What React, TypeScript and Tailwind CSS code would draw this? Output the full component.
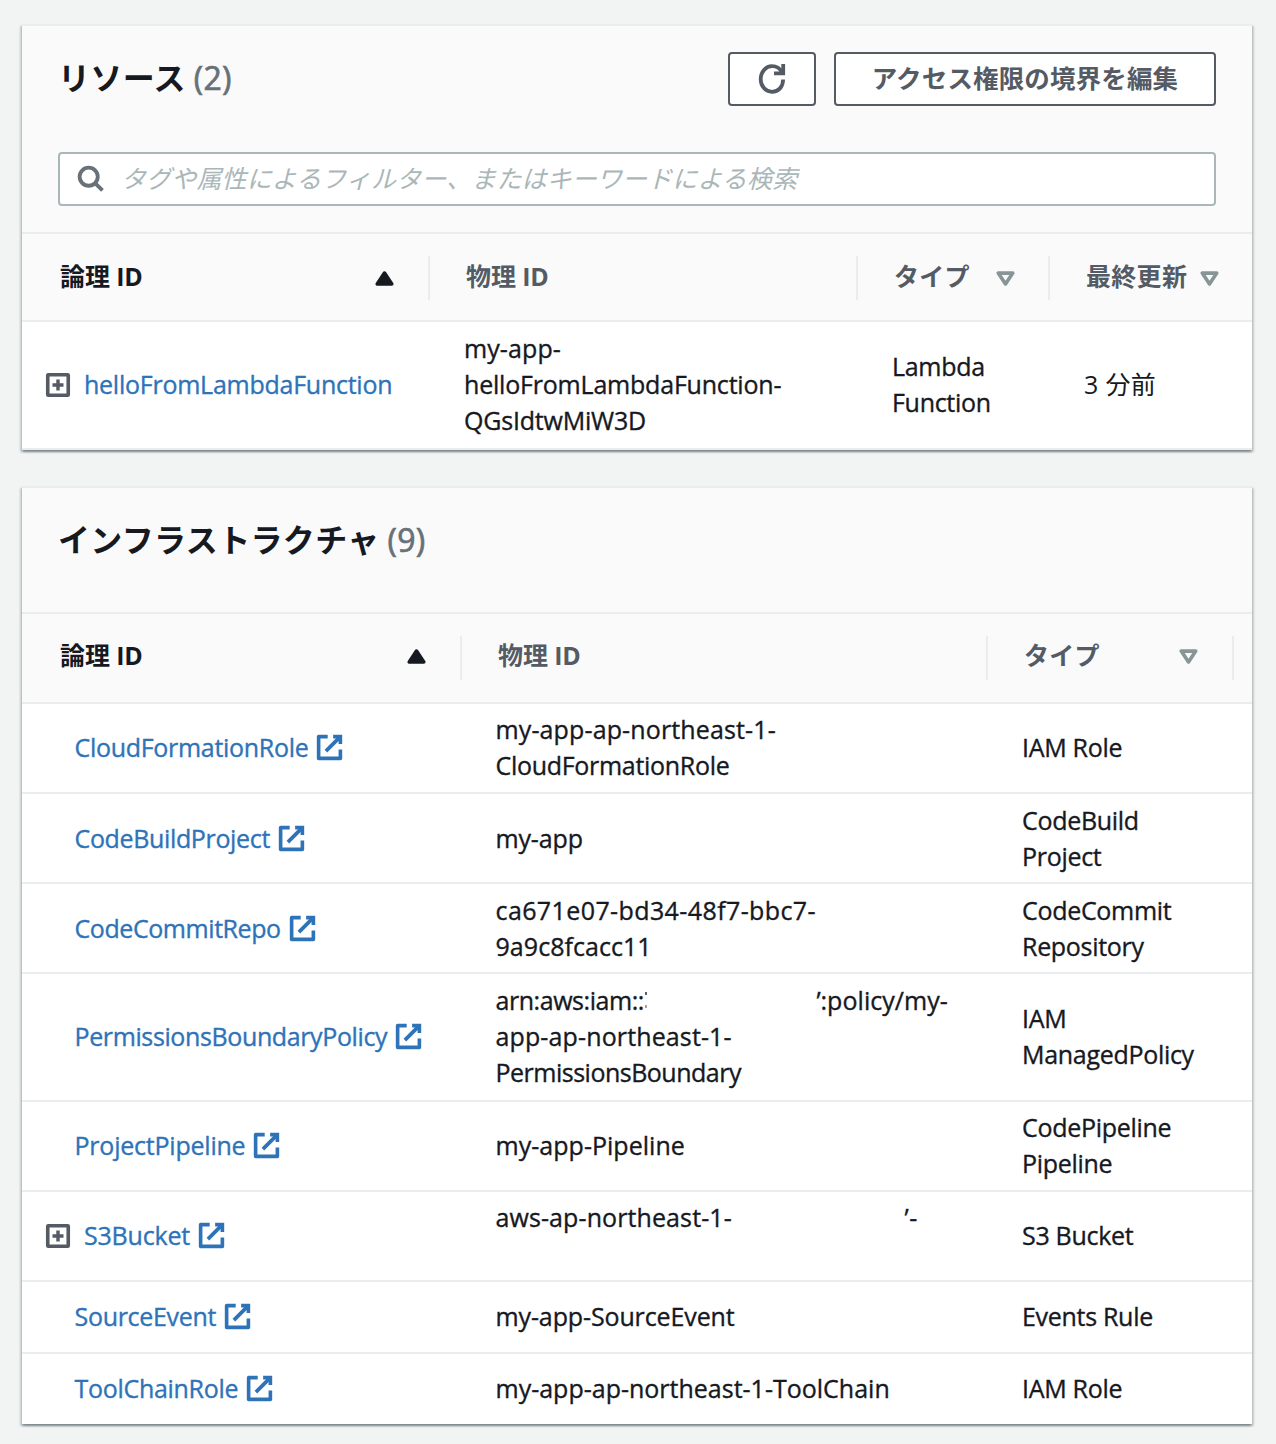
import React from "react";
import clsx from "clsx";

interface Column {
  label: string;
  sort?: "asc" | "none";
  className?: string;
}

interface Row {
  name: string;
  physical: React.ReactNode;
  type: React.ReactNode;
  updated?: string;
  expandable?: boolean;
  external?: boolean;
  height: string;
  // 文字幅の微調整
  tracking?: string;
}

const ExternalIcon = () => (
  <svg viewBox="0 0 16 16" className="mb-[2px] ml-[7px] size-[29px] shrink-0 fill-none stroke-current stroke-2">
    <path d="M10 2h4v4" />
    <path d="m6 10 8-8" />
    <path d="M14 9.05V14H2V2h5" strokeLinejoin="round" />
  </svg>
);

const SortIcon = ({ sort, className }: { sort: "asc" | "none"; className?: string }) => (
  <svg
    viewBox="0 0 16 16"
    strokeLinejoin="round"
    className={clsx(
      "size-[29px] shrink-0 stroke-2",
      sort === "asc" ? "fill-[#16191f] stroke-[#16191f]" : "fill-none stroke-[#879596]",
      className
    )}
  >
    {sort === "asc" ? <path d="M4 11h8L8 5z" /> : <path d="M4 5h8l-4 6z" />}
  </svg>
);

const ExpandIcon = () => (
  <svg viewBox="0 0 26 26" className="size-[26px] shrink-0 fill-none stroke-[#545b64]">
    <rect x="2.75" y="2.75" width="20.5" height="20.5" rx="0.5" strokeWidth="3.6" />
    <path d="M13 7.5v11M7.5 13h11" strokeWidth="3.4" />
  </svg>
);

// 伏せ字の手前に残る文字の断片
const MaskEdge = () => (
  <span className="flex w-[2px] flex-col gap-[10px] pt-[10px]">
    <span className="h-[3px] bg-[#16191f]/70" />
    <span className="h-[3px] bg-[#16191f]/40" />
  </span>
);

const resources: Row[] = [
  {
    name: "helloFromLambdaFunction",
    physical: (
      <>
        <span className="tracking-[0.1px]">my-app-</span><br />
        <span className="tracking-[-0.2px]">helloFromLambdaFunction-</span><br />
        <span className="tracking-[-0.2px]">QGsIdtwMiW3D</span>
      </>
    ),
    type: <>Lambda<br />Function</>,
    updated: "3 分前",
    expandable: true,
    height: "h-[128px]",
    tracking: "tracking-[-0.25px]",
  },
];

const infrastructure: Row[] = [
  {
    name: "CloudFormationRole",
    physical: <><span className="tracking-[0.13px]">my-app-ap-northeast-1-</span><br />CloudFormationRole</>,
    type: "IAM Role",
    external: true,
    height: "h-[90px]",
  },
  {
    name: "CodeBuildProject",
    physical: <span className="tracking-[-0.15px]">my-app</span>,
    type: <>CodeBuild<br />Project</>,
    external: true,
    height: "h-[90px] pt-[2px]",
    tracking: "tracking-[-0.35px]",
  },
  {
    name: "CodeCommitRepo",
    physical: <><span className="tracking-[0.4px]">ca671e07-bd34-48f7-bbc7-</span><br /><span className="tracking-[0.05px]">9a9c8fcacc11</span></>,
    type: <>CodeCommit<br />Repository</>,
    external: true,
    height: "h-[90px] pt-[2px]",
    tracking: "tracking-[-0.43px]",
  },
  {
    name: "PermissionsBoundaryPolicy",
    physical: (
      <>
        <span className="flex h-9">
          <span className="w-[149px] tracking-[-0.45px]">arn:aws:iam::</span>
          <MaskEdge />
          <span className="ml-[170px] w-[4px] tracking-[-0.3px]">’</span>
          <span className="tracking-[0.05px]">:policy/my-</span>
        </span>
        <span className="tracking-[0.13px]">app-ap-northeast-1-</span><br />
        <span className="tracking-[-0.5px]">PermissionsBoundary</span>
      </>
    ),
    type: <>IAM<br />ManagedPolicy</>,
    external: true,
    height: "h-[128px]",
    tracking: "tracking-[-0.38px]",
  },
  {
    name: "ProjectPipeline",
    physical: <span className="tracking-[0.03px]">my-app-Pipeline</span>,
    type: <>CodePipeline<br />Pipeline</>,
    external: true,
    height: "h-[90px]",
    tracking: "tracking-[-0.22px]",
  },
  {
    name: "S3Bucket",
    physical: (
      <span className="flex h-[72px]">
        <span className="w-[409px] tracking-[0.1px]">aws-ap-northeast-1-</span>
        <span className="tracking-[0.5px]">’-</span>
      </span>
    ),
    type: "S3 Bucket",
    expandable: true,
    external: true,
    height: "h-[90px]",
    tracking: "tracking-[-0.2px]",
  },
  {
    name: "SourceEvent",
    physical: <span className="tracking-[-0.12px]">my-app-SourceEvent</span>,
    type: "Events Rule",
    external: true,
    height: "h-[72px]",
  },
  {
    name: "ToolChainRole",
    physical: <span className="tracking-[0px]">my-app-ap-northeast-1-ToolChain</span>,
    type: "IAM Role",
    external: true,
    height: "h-[70px]",
  },
];

const Card = ({ children, className }: { children: React.ReactNode; className?: string }) => (
  <section
    className={clsx(
      "w-[1230px] border-t-2 border-[#eaeded] bg-white shadow-[0_2px_2px_0_rgba(0,28,36,0.3),2px_2px_2px_0_rgba(0,28,36,0.15),-2px_2px_2px_0_rgba(0,28,36,0.15)]",
      className
    )}
  >
    {children}
  </section>
);

const Title = ({ text, count }: { text: string; count: number }) => (
  <h2 className="flex text-[32px] leading-[40px] font-bold tracking-[0.35px] text-[#16191f]">
    {text}
    <span className="ml-[8px] font-normal tracking-[0.2px] text-[#687078] [-webkit-text-stroke:0.7px_#687078]">
      ({count})
    </span>
  </h2>
);

const HeaderRow = ({ columns, grid, className }: { columns: Column[]; grid: string; className: string }) => (
  <div className={clsx("grid border-y-2 border-[#eaeded] bg-[#fafafa] pt-[22px]", grid, className)}>
    {columns.map((col, idx) => (
      <div
        key={col.label}
        className={clsx(
          "flex h-11 items-center justify-between font-bold",
          idx === 0 ? "pl-[38px] text-[#16191f]" : "pl-9 text-[#545b64]",
          col.className
        )}
      >
        <span className={clsx("pb-1 whitespace-nowrap", col.label.endsWith("ID") ? "tracking-[-0.1px]" : "tracking-[0.3px]")}>
          {col.label}
        </span>
        {col.sort && <SortIcon sort={col.sort} />}
      </div>
    ))}
  </div>
);

const TableRow = ({ row, grid, last }: { row: Row; grid: string; last?: boolean }) => (
  <div
    className={clsx(
      "grid items-center border-[#eaeded] text-[#16191f] [-webkit-text-stroke:0.35px]",
      !last && "border-b-2",
      grid,
      row.height
    )}
  >
    <div className={clsx("flex items-center text-[#2e73b8]", row.expandable ? "pl-[23px]" : "pl-[52.5px]")}>
      {row.expandable && (
        <span className="mr-[13px] flex">
          <ExpandIcon />
        </span>
      )}
      <span className={clsx("pb-[2px]", row.tracking)}>{row.name}</span>
      {row.external && <ExternalIcon />}
    </div>
    <div className={clsx("pb-[2px] whitespace-nowrap", row.updated ? "pl-[34px]" : "pl-[33.5px]")}>{row.physical}</div>
    <div className="pb-[2px] pl-[34px] whitespace-nowrap">{row.type}</div>
    {row.updated && (
      <div className="pb-[2px] pl-[34px] tracking-[0.3px] [-webkit-text-stroke:0px]">{row.updated}</div>
    )}
  </div>
);

const RESOURCE_GRID = "grid-cols-[408px_428px_192px_202px]";
const INFRA_GRID = "grid-cols-[440px_526px_246px_18px]";

export default function App() {
  return (
    <main className="h-[1444px] w-[1276px] bg-[#f2f3f3] pt-6 pl-[22px] font-['Open_Sans','Noto_Sans_CJK_JP',sans-serif] text-[25px] leading-9 tracking-[-0.3px]">
      <Card>
        <div className="h-[206px] bg-[#fafafa] pt-[26px] pr-9 pl-9">
          <div className="flex items-start justify-between">
            <div className="pt-[6px]">
              <Title text="リソース" count={2} />
            </div>
            <div className="flex gap-[18px]">
              <button className="flex h-[54px] w-[88px] items-center justify-center rounded-[4px] border-2 border-[#545b64] bg-white">
                <svg viewBox="0 0 30 34" className="mr-px h-[34px] w-[30px] fill-none stroke-[#545b64] stroke-[3.8]">
                  <path d="M26.1 17.5C26.1 24.8 21.5 29.8 15 29.8S3.700 24.2 3.700 17 8.700 4.2 15 4.2c4.6 0 8.3 2.6 10.100 6.600" />
                  <path d="M17 11.3h9.200V2" />
                </svg>
              </button>
              <button className="h-[54px] w-[382px] rounded-[4px] border-2 border-[#545b64] bg-white pb-[2px] text-[25.5px] font-bold tracking-[0.15px] text-[#545b64]">
                アクセス権限の境界を編集
              </button>
            </div>
          </div>
          <div className="mt-[46px] flex h-[54px] items-center rounded-[4px] border-2 border-[#aab7b8] bg-white pl-[16px]">
            <svg viewBox="0 0 16 16" className="mb-[2px] size-[29px] fill-none stroke-[#687078] stroke-[2.1]">
              <circle cx="7" cy="7" r="5" />
              <path d="m14.6 14.6-4.1-4.1" />
            </svg>
            <span className="ml-[16px] pb-[2px] tracking-[0.13px] text-[#aab7b8] italic">
              タグや属性によるフィルター、またはキーワードによる検索
            </span>
          </div>
        </div>
        <HeaderRow
          grid={RESOURCE_GRID}
          className="h-[90px]"
          columns={[
            { label: "論理 ID", sort: "asc", className: "border-r-2 border-[#eaeded] pr-[29.5px]" },
            { label: "物理 ID", className: "border-r-2 border-[#eaeded]" },
            { label: "タイプ", sort: "none", className: "border-r-2 border-[#eaeded] pr-[28.5px]" },
            { label: "最終更新", sort: "none", className: "pr-[28.5px]" },
          ]}
        />
        {resources.map((row) => (
          <TableRow key={row.name} row={row} grid={RESOURCE_GRID} />
        ))}
      </Card>

      <Card className="mt-9">
        <div className="h-[124px] bg-[#fafafa] pt-[32px] pl-9">
          <Title text="インフラストラクチャ" count={9} />
        </div>
        <HeaderRow
          grid={INFRA_GRID}
          className="h-[92px]"
          columns={[
            { label: "論理 ID", sort: "asc", className: "border-r-2 border-[#eaeded] pr-[29.5px] pb-[3px]" },
            { label: "物理 ID", className: "border-r-2 border-[#eaeded] pb-[3px]" },
            { label: "タイプ", sort: "none", className: "border-r-2 border-[#eaeded] pr-[29.5px] pb-[3px]" },
          ]}
        />
        {infrastructure.map((row, idx) => (
          <TableRow key={row.name} row={row} grid={INFRA_GRID} last={idx === infrastructure.length - 1} />
        ))}
      </Card>
    </main>
  );
}
